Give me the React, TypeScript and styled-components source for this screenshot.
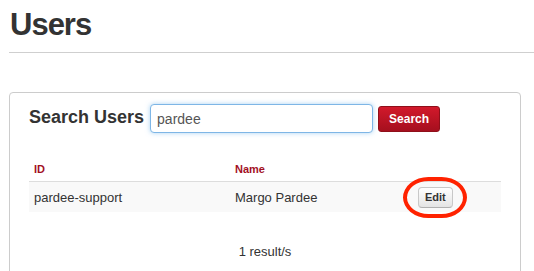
import styled, { createGlobalStyle } from "styled-components";

const GlobalStyle = createGlobalStyle`
  body {
    margin: 0;
    background: #fff;
    font-family: "Liberation Sans", Arial, Helvetica, sans-serif;
    color: #333;
  }
`;

const users = [{ id: "pardee-support", name: "Margo Pardee" }];

const App = () => {
  return (
    <Page>
      <GlobalStyle />
      <Title>Users</Title>
      <Panel>
        <SearchRow>
          <SearchHeading>Search Users</SearchHeading>
          <SearchInput defaultValue="pardee" />
          <SearchButton>Search</SearchButton>
        </SearchRow>
        <Table>
          <HeadCell>ID</HeadCell>
          <HeadCell>Name</HeadCell>
          <HeadCell />
          {users.map((user) => (
            <Row key={user.id}>
              <Cell>{user.id}</Cell>
              <Cell>{user.name}</Cell>
              <Cell>
                <EditWrap>
                  <EditButton>Edit</EditButton>
                  <Highlight />
                </EditWrap>
              </Cell>
            </Row>
          ))}
        </Table>
        <ResultCount>{users.length} result/s</ResultCount>
      </Panel>
    </Page>
  );
};

const Page = styled.div`
  padding-left: 9px;
  overflow: hidden;
  height: 271px;
`;

const Title = styled.h1`
  margin: 7px 0 0;
  padding: 0 0 9px 1px;
  font-size: 31px;
  line-height: 36px;
  font-weight: bold;
  letter-spacing: -1px;
  color: #333;
  border-bottom: 1px solid #cfcfcf;
`;

const Panel = styled.div`
  margin-top: 39px;
  width: 512px;
  height: 220px;
  border: 1px solid #ccc;
  border-radius: 4px;
  padding: 11px 19px 0;
  box-sizing: border-box;
`;

const SearchRow = styled.div`
  display: flex;
  align-items: center;
  height: 29px;
`;

const SearchHeading = styled.h3`
  margin: 0 6px 4px 0;
  font-size: 18px;
  line-height: 20px;
  font-weight: bold;
  color: #333;
`;

const SearchInput = styled.input`
  width: 223px;
  height: 29px;
  box-sizing: border-box;
  padding: 0 6px;
  border: 1px solid #7eb6e6;
  border-radius: 4px;
  box-shadow: 0 0 5px rgba(102, 175, 233, 0.55);
  font-family: "Liberation Sans", Arial, sans-serif;
  font-size: 14px;
  color: #555;
  outline: none;
`;

const SearchButton = styled.button`
  margin-left: 5px;
  width: 62px;
  height: 26px;
  border: 1px solid #8f0f1a;
  border-radius: 3px;
  background: linear-gradient(#d2192b, #a50f1e);
  color: #fff;
  font-family: "Liberation Sans", Arial, sans-serif;
  font-size: 12px;
  font-weight: bold;
  padding: 0;
`;

const Table = styled.div`
  margin-top: 21px;
  display: grid;
  grid-template-columns: 201px 183px 1fr;
`;

const HeadCell = styled.div`
  padding: 8px 5px 6px;
  line-height: 14px;
  height: 28px;
  box-sizing: border-box;
  font-size: 11px;
  font-weight: bold;
  color: #a3101f;
  border-bottom: 1px solid #ddd;
`;

const Row = styled.div`
  display: contents;
`;

const Cell = styled.div`
  background: #f9f9f9;
  padding: 8px 5px;
  height: 30px;
  box-sizing: border-box;
  display: flex;
  align-items: center;
  font-size: 13px;
  color: #333;
`;

const EditWrap = styled.div`
  position: relative;
  display: inline-flex;
`;

const EditButton = styled.button`
  height: 21px;
  padding: 0 6px;
  border: 1px solid #c8c8c8;
  border-bottom-color: #b0b0b0;
  border-radius: 4px;
  background: linear-gradient(#fff, #e4e4e4);
  font-family: "Liberation Sans", Arial, sans-serif;
  font-size: 11px;
  font-weight: bold;
  color: #333;
`;

const Highlight = styled.span`
  position: absolute;
  left: -15px;
  top: -10px;
  width: 64px;
  height: 41px;
  box-sizing: border-box;
  border: 4.5px solid #ff2200;
  border-radius: 26px / 21px;
  pointer-events: none;
`;

const ResultCount = styled.div`
  margin-top: 31px;
  text-align: center;
  font-size: 13px;
  line-height: 18px;
  color: #333;
`;

export default App;
